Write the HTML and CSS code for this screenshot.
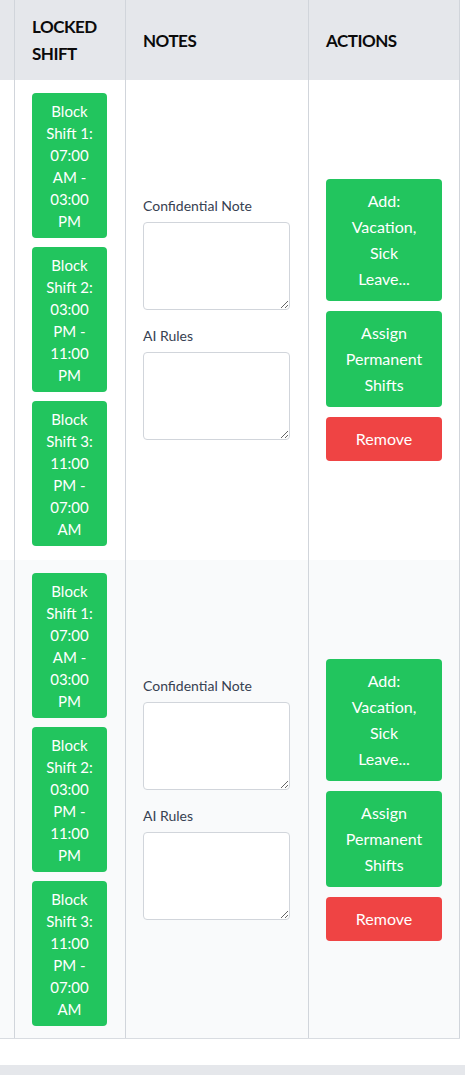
FILE: index.html
```html
<!DOCTYPE html>
<html lang="en">
<head>
<meta charset="utf-8">
<title>Shifts</title>
<link rel="stylesheet" href="styles.css">
</head>
<body>
<div class="card">
  <table class="grid">
    <colgroup>
      <col class="c0"><col class="c1"><col class="c2"><col class="c3">
    </colgroup>
    <thead>
      <tr>
        <th class="stub"></th>
        <th>Locked Shift</th>
        <th>Notes</th>
        <th>Actions</th>
      </tr>
    </thead>
    <tbody>
      <tr class="row">
        <td class="stub"></td>
        <td>
          <div class="shifts">
            <div class="shift">Block Shift 1: 07:00 AM - 03:00 PM</div>
            <div class="shift">Block Shift 2: 03:00 PM - 11:00 PM</div>
            <div class="shift">Block Shift 3: 11:00 PM - 07:00 AM</div>
          </div>
        </td>
        <td class="mid">
          <div class="notes">
            <label class="lbl">Confidential Note</label>
            <textarea class="ta"></textarea>
            <label class="lbl second">AI Rules</label>
            <textarea class="ta"></textarea>
          </div>
        </td>
        <td class="mid">
          <div class="actions">
            <button class="btn green"><span class="ln">Add:</span><span class="ln">Vacation,</span><span class="ln">Sick</span><span class="ln">Leave...</span></button>
            <button class="btn green"><span class="ln">Assign</span><span class="ln">Permanent</span><span class="ln">Shifts</span></button>
            <button class="btn red">Remove</button>
          </div>
        </td>
      </tr>
      <tr class="row alt">
        <td class="stub"></td>
        <td>
          <div class="shifts">
            <div class="shift">Block Shift 1: 07:00 AM - 03:00 PM</div>
            <div class="shift">Block Shift 2: 03:00 PM - 11:00 PM</div>
            <div class="shift">Block Shift 3: 11:00 PM - 07:00 AM</div>
          </div>
        </td>
        <td class="mid">
          <div class="notes">
            <label class="lbl">Confidential Note</label>
            <textarea class="ta"></textarea>
            <label class="lbl second">AI Rules</label>
            <textarea class="ta"></textarea>
          </div>
        </td>
        <td class="mid">
          <div class="actions">
            <button class="btn green"><span class="ln">Add:</span><span class="ln">Vacation,</span><span class="ln">Sick</span><span class="ln">Leave...</span></button>
            <button class="btn green"><span class="ln">Assign</span><span class="ln">Permanent</span><span class="ln">Shifts</span></button>
            <button class="btn red">Remove</button>
          </div>
        </td>
      </tr>
    </tbody>
  </table>
</div>
</body>
</html>
```

FILE: styles.css
```css
* { box-sizing: border-box; }
html, body { margin: 0; padding: 0; }
body {
  background: #e5e7eb;
  font-family: Lato, "Open Sans", sans-serif;
  color: #111827;
}
.card {
  width: 465px;
  background: #ffffff;
  padding-bottom: 26px;
  box-shadow: 0 4px 8px rgba(0,0,0,0.12);
}
.grid {
  width: 460px;
  table-layout: fixed;
  border-collapse: separate;
  border-spacing: 0;
  border-bottom: 1px solid #d9dce1;
}
.c0 { width: 15px; }
.c1 { width: 111px; }
.c2 { width: 183px; }
.c3 { width: 151px; }
th, td {
  border-right: 1px solid #d1d5db;
  padding: 13px 17px 14px 17px;
}
th {
  height: 80px;
  padding: 0 17px;
  background: #e5e7eb;
  text-align: left;
  vertical-align: middle;
  text-transform: uppercase;
  font-weight: 700;
  font-size: 17px;
  line-height: 27px;
  letter-spacing: -0.5px;
  color: #0b0b0b;
}
th.stub, td.stub { padding: 0; }
td { vertical-align: top; }
td.mid { vertical-align: middle; }
.row { background: #ffffff; }
.row.alt { background: #f9fafb; }
.row.alt td { padding-bottom: 12px; }
.row.alt td.stub { padding: 0; }
.shifts {
  display: flex;
  flex-direction: column;
  gap: 9px;
  width: 75px;
}
.shift {
  background: #22c55e;
  color: #ffffff;
  border-radius: 4px;
  text-align: center;
  font-size: 15px;
  line-height: 22px;
  padding: 6.5px 11px;
}
.notes {
  display: flex;
  flex-direction: column;
  padding-bottom: 4px;
}
.lbl {
  display: block;
  font-size: 14px;
  line-height: 20px;
  color: #374151;
  margin-bottom: 6px;
}
.lbl.second { margin-top: 16px; }
.ta {
  display: block;
  width: 147px;
  height: 88px;
  margin: 0;
  border: 1px solid #d1d5db;
  border-radius: 4px;
  background: #ffffff;
  resize: vertical;
}
.actions {
  display: flex;
  flex-direction: column;
  gap: 10px;
  width: 116px;
}
.btn {
  display: block;
  width: 116px;
  border: 0;
  border-radius: 4px;
  color: #ffffff;
  font-family: Lato, "Open Sans", sans-serif;
  font-size: 16px;
  line-height: 26px;
  padding: 9px 8px;
  text-align: center;
}
.btn .ln { display: block; }
.green { background: #22c55e; }
.red { background: #ef4444; }
```
